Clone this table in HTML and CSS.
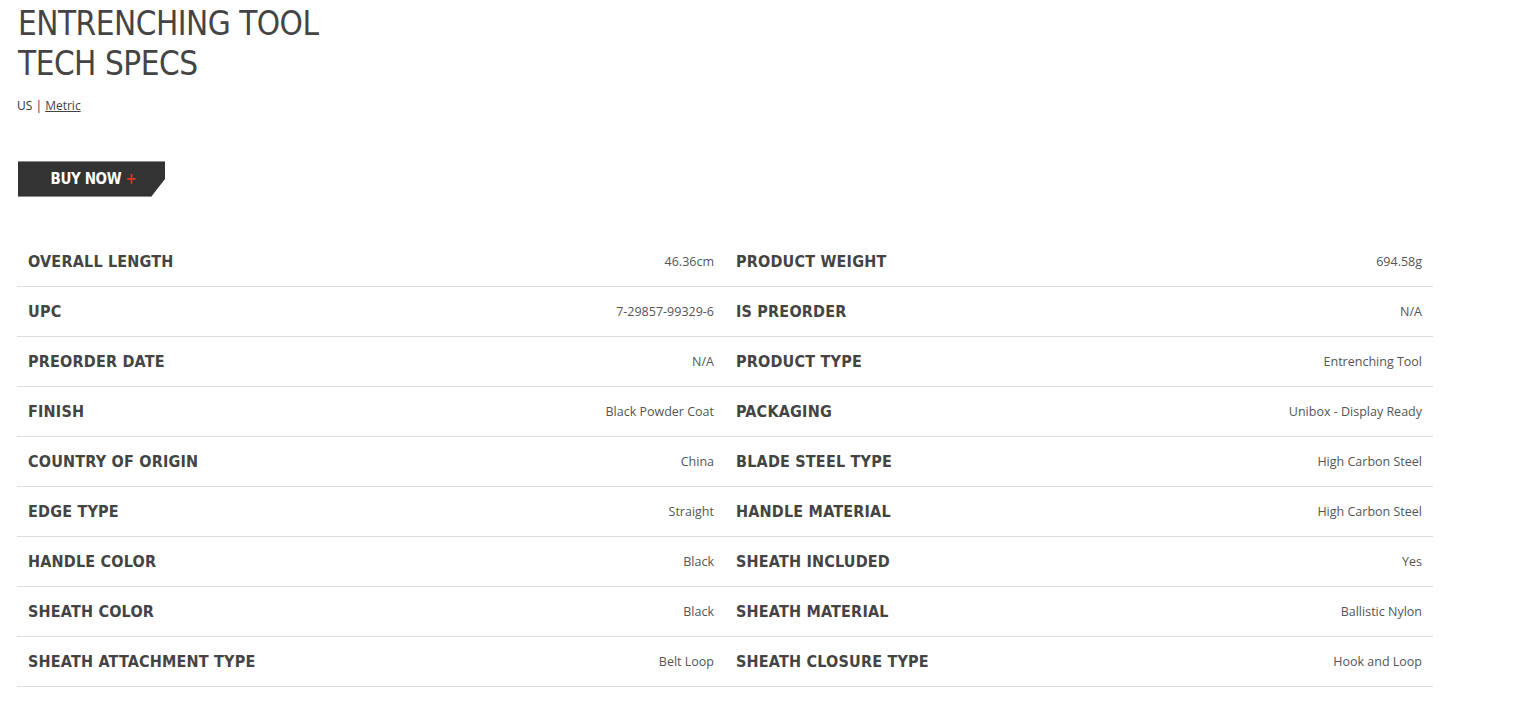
FILE: index.html
```html
<!DOCTYPE html>
<html>
<head>
<meta charset="utf-8">
<link rel="stylesheet" href="styles.css">
</head>
<body>
<div class="page">
  <h1 class="title">ENTRENCHING TOOL<br>TECH SPECS</h1>
  <div class="units">US | <a href="#" class="metric">Metric</a></div>
  <a href="#" class="buy"><span class="buy-text">BUY NOW <span class="plus">+</span></span></a>
  <div class="specs">
    <div class="cell"><span class="label">OVERALL LENGTH</span><span class="value">46.36cm</span></div>
    <div class="cell"><span class="label">PRODUCT WEIGHT</span><span class="value">694.58g</span></div>
    <div class="cell"><span class="label">UPC</span><span class="value">7-29857-99329-6</span></div>
    <div class="cell"><span class="label">IS PREORDER</span><span class="value">N/A</span></div>
    <div class="cell"><span class="label">PREORDER DATE</span><span class="value">N/A</span></div>
    <div class="cell"><span class="label">PRODUCT TYPE</span><span class="value">Entrenching Tool</span></div>
    <div class="cell"><span class="label">FINISH</span><span class="value">Black Powder Coat</span></div>
    <div class="cell"><span class="label">PACKAGING</span><span class="value">Unibox - Display Ready</span></div>
    <div class="cell"><span class="label">COUNTRY OF ORIGIN</span><span class="value">China</span></div>
    <div class="cell"><span class="label">BLADE STEEL TYPE</span><span class="value">High Carbon Steel</span></div>
    <div class="cell"><span class="label">EDGE TYPE</span><span class="value">Straight</span></div>
    <div class="cell"><span class="label">HANDLE MATERIAL</span><span class="value">High Carbon Steel</span></div>
    <div class="cell"><span class="label">HANDLE COLOR</span><span class="value">Black</span></div>
    <div class="cell"><span class="label">SHEATH INCLUDED</span><span class="value">Yes</span></div>
    <div class="cell"><span class="label">SHEATH COLOR</span><span class="value">Black</span></div>
    <div class="cell"><span class="label">SHEATH MATERIAL</span><span class="value">Ballistic Nylon</span></div>
    <div class="cell"><span class="label">SHEATH ATTACHMENT TYPE</span><span class="value">Belt Loop</span></div>
    <div class="cell"><span class="label">SHEATH CLOSURE TYPE</span><span class="value">Hook and Loop</span></div>
  </div>
</div>
</body>
</html>
```
FILE: styles.css
```css
* { box-sizing: border-box; }
body {
  margin: 0;
  background: #fff;
  font-family: "Open Sans", "Liberation Sans", sans-serif;
  color: #444;
}
.page {
  padding: 0 83px 0 17px;
}
.title {
  margin: 0;
  padding-top: 4px;
  padding-left: 1px;
  font-family: "DejaVu Sans Condensed", "Liberation Sans", sans-serif;
  font-weight: normal;
  font-size: 33px;
  line-height: 40px;
  letter-spacing: -0.5px;
  color: #444;
}
.units {
  margin-top: 13px;
  font-size: 12px;
  line-height: 18px;
  color: #333;
}
.metric {
  color: #444;
  text-decoration: underline;
}
.buy {
  display: flex;
  align-items: center;
  justify-content: center;
  margin-top: 46px;
  margin-left: 1px;
  width: 147px;
  height: 36px;
  background: #333;
  border-top: 1px solid #888;
  border-bottom: 1px solid #888;
  clip-path: polygon(0 0, 100% 0, 100% 50%, calc(100% - 14px) 100%, 0 100%);
  color: #fff;
  text-decoration: none;
  font-family: "DejaVu Sans Condensed", "Liberation Sans", sans-serif;
  font-weight: bold;
  font-size: 15px;
  letter-spacing: -0.4px;
  padding-left: 4px;
}
.plus {
  color: #e8302a;
}
.specs {
  margin-top: 40px;
  display: grid;
  grid-template-columns: 708px 708px;
}
.cell {
  display: flex;
  align-items: center;
  justify-content: space-between;
  height: 50px;
  padding: 0 11px;
  border-bottom: 1px solid #ddd;
}
.label {
  font-family: "DejaVu Sans Condensed", "Liberation Sans", sans-serif;
  font-weight: bold;
  font-size: 16px;
  letter-spacing: 0.2px;
  color: #444;
}
.value {
  font-size: 12.5px;
  color: #555;
}
```
